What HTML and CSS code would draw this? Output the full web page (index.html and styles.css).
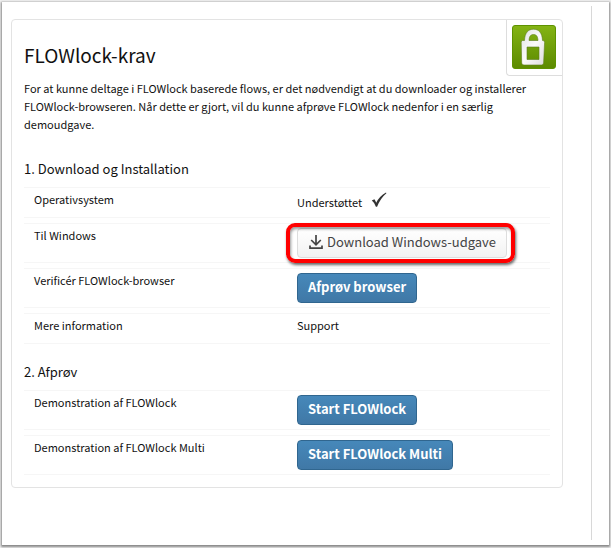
FILE: index.html
```html
<!DOCTYPE html>
<html lang="da">
<head>
    <meta charset="UTF-8">
    <meta name="viewport" content="width=device-width, initial-scale=1.0">
    <title>FLOWlock-krav</title>
    <link rel="stylesheet" href="styles.css">
</head>
<body>

    <div class="page">
        <main class="content">
            <section class="panel">
                <div class="badge">
                    <svg width="44" height="44" viewBox="0 0 44 44" role="img" aria-label="FLOWlock">
                        <defs>
                            <linearGradient id="green" x1="0" y1="0" x2="0" y2="1">
                                <stop offset="0" stop-color="#84b414"/>
                                <stop offset="1" stop-color="#5c8a00"/>
                            </linearGradient>
                            <linearGradient id="silver" x1="0" y1="0" x2="1" y2="1">
                                <stop offset="0" stop-color="#e0e2e0"/>
                                <stop offset="0.5" stop-color="#fafafa"/>
                                <stop offset="1" stop-color="#dcdcdc"/>
                            </linearGradient>
                        </defs>
                        <rect x="0.5" y="0.5" width="43" height="43" rx="2.5" fill="url(#green)" stroke="#5e9200"/>
                        <path fill="url(#silver)" stroke="#5d7d1c" stroke-width="0.6" fill-rule="evenodd" d="M10.5 15.5H12.500C12.800 8 16 4.200 21.500 4.200C27 4.200 30.200 8 30.500 15.500H31Q32.700 15.500 32.600 17.500L31.600 38Q31.500 40 29.500 40H12Q9.800 40 9.700 38L9.200 17.500Q9.200 15.500 10.500 15.500ZM17 15.500H26C25.800 11.500 24.500 9.500 21.500 9.500C18.500 9.500 17.200 11.500 17 15.500ZM15 22V34.500H27V22Z"/>
                    </svg>
                </div>

                <h1>FLOWlock-krav</h1>
                <p class="intro">For at kunne deltage i FLOWlock baserede flows, er det nødvendigt at du downloader og installerer FLOWlock-browseren. Når dette er gjort, vil du kunne afprøve FLOWlock nedenfor i en særlig demoudgave.</p>

                <h2>1. Download og Installation</h2>
                <div class="rows">
                    <div class="row">
                        <div class="label">Operativsystem</div>
                        <div class="value status">
                            <span>Understøttet</span>
                            <svg class="check" width="16" height="16" viewBox="0 0 16 16" aria-hidden="true">
                                <path fill="#333" d="M0.800 8.600L3.400 7.300Q4.600 8.800 5.200 10.800Q8.500 4.200 15 0.600L15.400 1.300Q9.500 6.300 6.100 14.700H4.900Q3.300 10.500 0.800 8.600Z"/>
                            </svg>
                        </div>
                    </div>
                    <div class="row">
                        <div class="label">Til Windows</div>
                        <div class="value marked">
                            <button type="button" class="btn">
                                <svg width="15" height="16" viewBox="-1 0 15 16" aria-hidden="true">
                                    <path fill="none" stroke="#444" stroke-width="1.700" d="M7 1V10.500M2.200 6L7 10.800L11.800 6M1 11.500V14.200H13V11.500"/>
                                </svg>
                                Download Windows-udgave
                            </button>
                        </div>
                    </div>
                    <div class="row">
                        <div class="label">Verificér FLOWlock-browser</div>
                        <div class="value"><button type="button" class="btn btn-primary">Afprøv browser</button></div>
                    </div>
                    <div class="row">
                        <div class="label">Mere information</div>
                        <div class="value"><a href="#">Support</a></div>
                    </div>
                </div>

                <h2>2. Afprøv</h2>
                <div class="rows">
                    <div class="row">
                        <div class="label">Demonstration af FLOWlock</div>
                        <div class="value"><button type="button" class="btn btn-primary">Start FLOWlock</button></div>
                    </div>
                    <div class="row">
                        <div class="label">Demonstration af FLOWlock Multi</div>
                        <div class="value"><button type="button" class="btn btn-primary">Start FLOWlock Multi</button></div>
                    </div>
                </div>
            </section>
        </main>
    </div>

</body>
</html>
```

FILE: styles.css
```css
* {
    box-sizing: border-box;
}
body {
    margin: 0;
    padding: 2px 2px 3px;
    min-height: 100vh;
    display: flex;
    background-color: #f2f2f2;
    font-family: "Noto Sans CJK SC", Lato, sans-serif;
    font-size: 11px;
    line-height: 18px;
    color: #111;
}
.page {
    flex: 1;
    display: flex;
    padding: 4px 17px 5px 9px;
    background-color: #fff;
    box-shadow: 0 1px 2px 1px #888;
}
.content {
    flex: 1;
    padding: 13px 28px 0 0;
    border-right: 1px solid #d8d8d8;
}
.panel {
    position: relative;
    padding: 23px 12px 12px;
    border: 1px solid #e3e3e3;
    border-radius: 4px;
}
.badge {
    position: absolute;
    top: 0;
    right: 0;
    padding: 5px 6px 6px 5px;
    border: 1px solid #ddd;
    border-width: 0 0 1px 1px;
    border-radius: 0 0 0 4px;
}
.badge svg {
    display: block;
}
h1 {
    margin: 0 0 12px;
    font-size: 19px;
    line-height: 24px;
    font-weight: normal;
}
.intro {
    margin: 0 20px 27px 0;
}
h2 {
    margin: 0 0 9px;
    font-size: 13px;
    line-height: 18px;
    font-weight: normal;
}
.rows {
    display: grid;
    gap: 5px;
}
.rows + h2 {
    margin-top: 19px;
}
.row {
    display: grid;
    grid-template-columns: 1fr 1fr;
    padding: 4px 0;
    border: 1px solid #f6f6f6;
    border-width: 1px 0;
    line-height: 14px;
}
.label,
.value {
    padding-left: 10px;
}
.label {
    padding-bottom: 7px;
}
.value a {
    color: inherit;
    text-decoration: none;
}
.status {
    display: flex;
    align-items: flex-end;
    gap: 9px;
    padding-bottom: 4px;
}
.check {
    margin-bottom: 1px;
}
.btn {
    display: flex;
    align-items: center;
    gap: 4px;
    height: 30px;
    padding: 0 10px 2px;
    border: 1px solid #ddd;
    border-radius: 4px;
    background: linear-gradient(#fff, #f2f2f2);
    color: #444;
    font-family: inherit;
    font-size: 13px;
    line-height: 18px;
    white-space: nowrap;
}
.btn-primary {
    border-color: #30668f;
    background: linear-gradient(#4688ba, #4078a6);
    color: #fff;
    font-weight: bold;
}
/* red frame around the download button */
.marked {
    position: relative;
    justify-self: start;
}
.marked::after {
    content: "";
    position: absolute;
    inset: -5px -8px -5px -1px;
    border: 4px solid #f00;
    border-radius: 9px;
    box-shadow: 1px 2px 3px rgba(0, 0, 0, 0.6), inset 1px 2px 3px rgba(0, 0, 0, 0.4);
    pointer-events: none;
}
```
